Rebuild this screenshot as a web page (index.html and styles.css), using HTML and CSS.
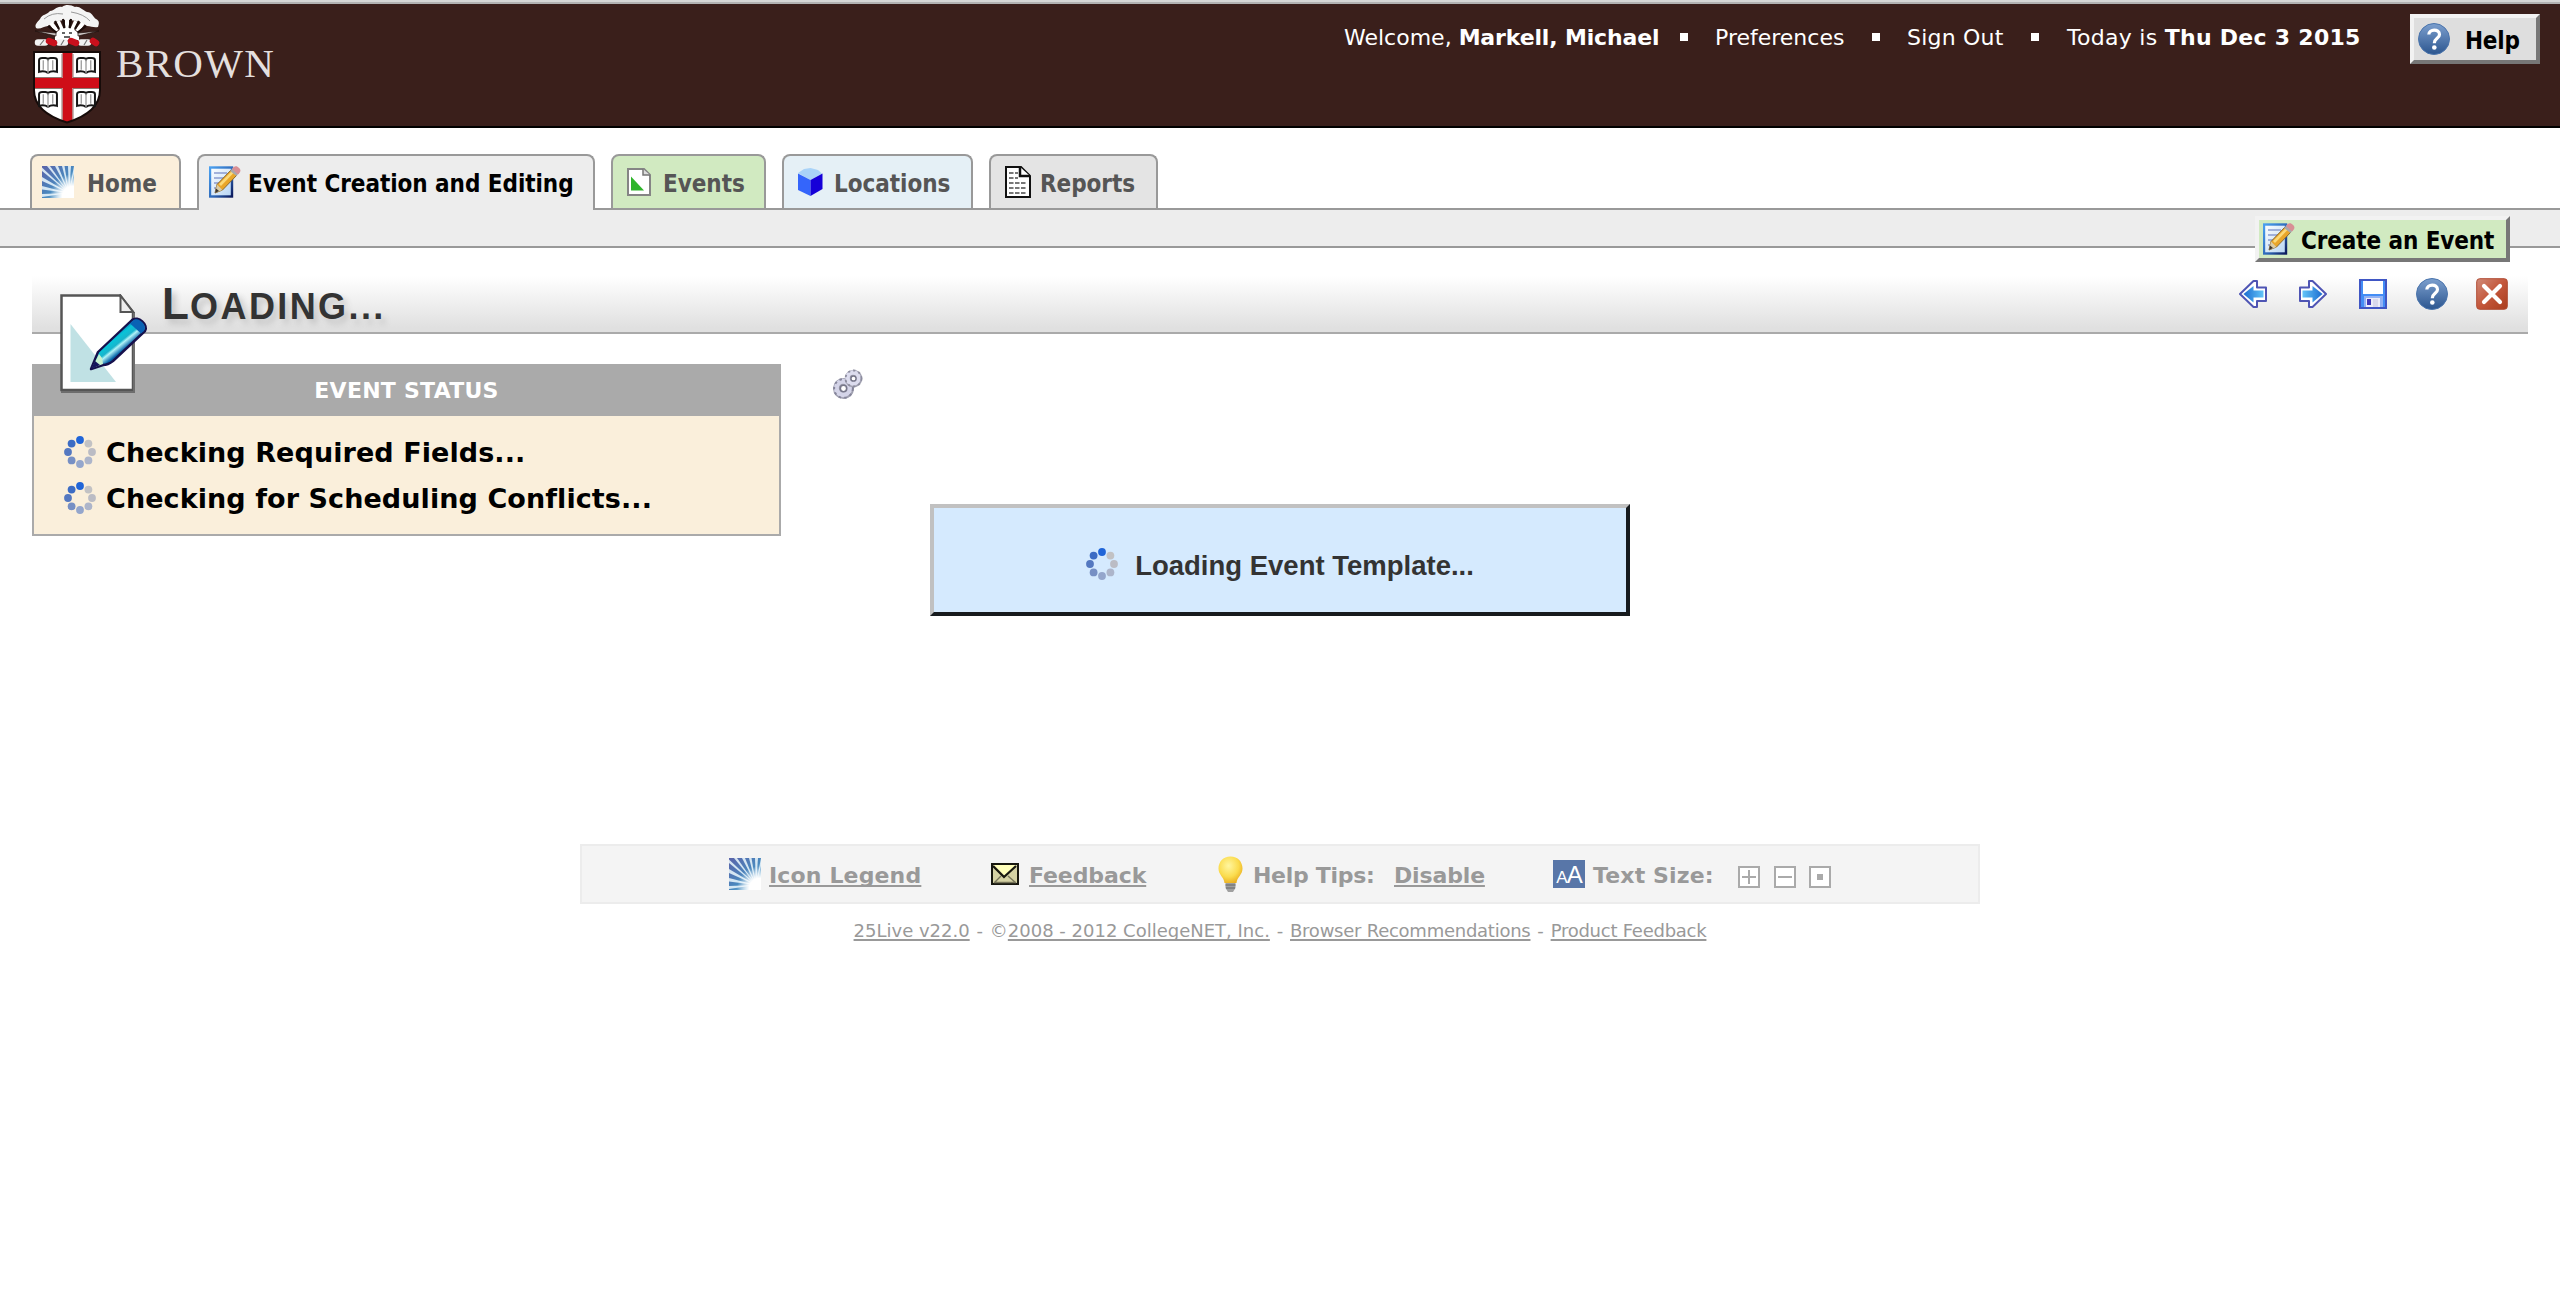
FILE: index.html
```
<!DOCTYPE html>
<html lang="en">
<head>
<meta charset="utf-8">
<title>25Live</title>
<link rel="stylesheet" href="styles.css">
</head>
<body>
<svg class="defs" aria-hidden="true">
  <defs>
    <linearGradient id="gBlue" x1="0" y1="0" x2="0" y2="1"><stop offset="0" stop-color="#7c9fce"/><stop offset="1" stop-color="#2c568f"/></linearGradient>
    <linearGradient id="gRed" x1="0" y1="0" x2="1" y2="1"><stop offset="0" stop-color="#d08a78"/><stop offset=".5" stop-color="#c4573b"/><stop offset="1" stop-color="#a93c1c"/></linearGradient>
    <linearGradient id="gRay" x1="0" y1="0" x2="1" y2="1"><stop offset="0" stop-color="#5a62a8"/><stop offset=".55" stop-color="#4a8abf"/><stop offset="1" stop-color="#c8eef8"/></linearGradient>
    <radialGradient id="gGlow" cx="0.95" cy="0.95" r=".7"><stop offset=".45" stop-color="#fff"/><stop offset="1" stop-color="#fff" stop-opacity="0"/></radialGradient>
    <linearGradient id="gPage" x1="0" y1="0" x2="1" y2="1"><stop offset="0" stop-color="#fff"/><stop offset="1" stop-color="#b5d4f3"/></linearGradient>
    <linearGradient id="gFrame" x1="0" y1="0" x2="1" y2="1"><stop offset="0" stop-color="#4aa0f0"/><stop offset=".6" stop-color="#2c64b4"/><stop offset="1" stop-color="#0c1a5c"/></linearGradient>
    <linearGradient id="gArrow" x1="0" y1="0" x2="1" y2="0"><stop offset="0" stop-color="#1c6cd0"/><stop offset="1" stop-color="#62c4f8"/></linearGradient>
    <radialGradient id="gBulb" cx=".42" cy=".35" r=".7"><stop offset="0" stop-color="#fff6a0"/><stop offset=".6" stop-color="#fbdc4e"/><stop offset="1" stop-color="#e9ab1c"/></radialGradient>
    <linearGradient id="gPen" gradientUnits="userSpaceOnUse" x1="50" y1="40" x2="63" y2="56"><stop offset="0" stop-color="#0648a0"/><stop offset=".35" stop-color="#08c4d8"/><stop offset=".6" stop-color="#18b4cc"/><stop offset=".72" stop-color="#b0f4f8"/><stop offset="1" stop-color="#0864a8"/></linearGradient>
    <clipPath id="cShield"><path d="M6 48H72V86C72 102 60 112 39 118.500C18 112 6 102 6 86Z"/></clipPath>

    <symbol id="rays" viewBox="0 0 32 32">
      <rect width="32" height="32" fill="url(#gRay)"/>
      <g fill="#e3f2fa" fill-opacity=".9">
        <path d="M27 27L0 31V28Z"/><path d="M27 27L0 23.500V20Z"/><path d="M27 27L0 15V11Z"/><path d="M27 27L0 5V1.500Z"/>
        <path d="M27 27L5 0H8Z"/><path d="M27 27L13 0H16Z"/><path d="M27 27L20 0H22.500Z"/><path d="M27 27L26 0H29Z"/><path d="M27 27L32 0V8Z"/>
      </g>
      <rect width="32" height="32" fill="url(#gGlow)"/>
    </symbol>
    <symbol id="edit" viewBox="0 0 32 32">
      <rect x="1" y="1.500" width="22" height="29" fill="url(#gPage)" stroke="url(#gFrame)" stroke-width="2.400"/>
      <path d="M5 7H18M5 12H17M5 17H13M5 22H10" stroke="#8a9cd0" stroke-width="1.600"/>
      <path d="M6 27L8 18.500L22 4L28 9L13.500 24Z" fill="#e9a62a" stroke="#8a6a30" stroke-width="1"/>
      <path d="M10 18L23.500 4.500L25.500 6L12 20Z" fill="#fbd978"/>
      <path d="M6 27L8 18.500L13.500 24Z" fill="#d9cba6"/><path d="M6 27L7 22.500L10 25Z" fill="#3a3430"/>
      <path d="M21 5L24 2L30 7L27.500 10Z" fill="#a8a8ac"/><path d="M23 3C25-0.500 28-0.500 30 2C32.500 4 31.500 6.500 29 8.500Z" fill="#d88f95"/>
    </symbol>
    <symbol id="q" viewBox="0 0 32 32">
      <circle cx="16" cy="16" r="15.500" fill="url(#gBlue)" stroke="#4a74ac"/>
      <path d="M10.800 11.500C11 5.800 21.300 5.400 21.500 11.500C21.500 15.400 16.300 15.400 16.300 20.200" fill="none" stroke="#fff" stroke-width="3.200"/>
      <circle cx="16.300" cy="24.500" r="2.300" fill="#fff"/>
    </symbol>
    <symbol id="arrow" viewBox="0 0 28 28">
      <path d="M1 14L14.500 1H18V7.500H27V21H18V27H14.500Z" fill="#fff" stroke="#4f55b4" stroke-width="2" stroke-linejoin="round"/>
      <path d="M4.500 14L14.500 6V10.500H24.500V17.500H14.500V22.500Z" fill="url(#gArrow)"/>
    </symbol>
    <symbol id="spin" viewBox="0 0 32 32">
      <circle cx="16" cy="4" r="3.900" fill="#2065d8"/><circle cx="7.600" cy="7.600" r="3.900" fill="#3c6cc4"/>
      <circle cx="4" cy="16" r="3.900" fill="#5478c0"/><circle cx="7.600" cy="24.400" r="3.900" fill="#768fc4"/>
      <circle cx="16" cy="28" r="3.900" fill="#94a6cc"/><circle cx="24.400" cy="24.400" r="3.900" fill="#adb5ca"/>
      <circle cx="28" cy="16" r="3.900" fill="#bbbcc4"/><circle cx="24.400" cy="7.600" r="3.900" fill="#c2c2c4"/>
    </symbol>
    <symbol id="book" viewBox="0 0 19 17">
      <path d="M1 14V3Q1 1 4 1H7Q9 1 9.500 2Q10 1 12 1H15Q18 1 18 3V14Q13 12.500 9.500 15Q6 12.500 1 14Z" fill="#fff" stroke="#161616" stroke-width="1.900"/>
      <path d="M5 3V12M9.500 2V16M14 3V12" stroke="#999" stroke-width="1.200"/>
    </symbol>
  </defs>
</svg>

<header class="top">
  <div class="brand">
    <svg class="crest" viewBox="0 0 78 122" width="78" height="122">
      <path d="M8 24C6 20 10 18 12 15C14 10 19 11 22 7C27 7 28 2 34 3C38 0 43 1 47 3C52 2 54 6 59 8C64 8 65 13 68 15C72 17 71 20 70 23C66 24 63 22 59 22C53 18 47 16 39 16C31 16 26 18 20 22C16 22 12 26 8 24Z" fill="#f4f4f4"/>
      <path d="M16 15Q24 8 35 10M43 8Q56 10 62 17" fill="none" stroke="#999" stroke-width="1"/>
      <path d="M23 19L29 27M30 17L34 26M39 16V26M48 17L44 26M55 19L49 27" stroke="#fff" stroke-width="4"/>
      <path d="M20 22L29 29M27 17L31 25M35 15L36.500 24M43 15L41.500 24M51 17L47 25M58 22L49 29" stroke="#1b0c09" stroke-width="2.200"/>
      <path d="M27 36C26 28 32 24 39 24C46 24 52 28 51 36Z" fill="#fff"/>
      <path d="M7 27L28 29V32ZM71 27L50 29V32Z" fill="#cfc8c6" stroke="#1b0c09" stroke-width=".7"/>
      <path d="M34 29H37M41 29H44M36 33H42" stroke="#333" stroke-width="1.500"/>
      <g stroke-width="6.500" stroke-linecap="round">
        <path d="M10 38.500L17 38.500M31 38.500L37 38.500M53 38.500L60 38.500" stroke="#f2f2f2"/>
        <path d="M21 37L26 39M43 37L48 39M65 37L68 39" stroke="#c9101c"/>
      </g>
      <path d="M12 41L16 36M33 41L36 36M56 41L59 36" stroke="#777" stroke-width="1.200"/>
      <g clip-path="url(#cShield)">
        <rect x="6" y="48" width="66" height="76" fill="#fff"/>
        <path d="M39.500 48V124M6 79H72" stroke="#cf0e18" stroke-width="10"/>
        <path d="M34 50V73.500H6M45 50V73.500H72M34 124V84.500H6M45 124V84.500H72" fill="none" stroke="#8b7770" stroke-width="1"/>
      </g>
      <path d="M6 48H72V86C72 102 60 112 39 118.500C18 112 6 102 6 86Z" fill="none" stroke="#160b09" stroke-width="2"/>
      <use href="#book" x="10" y="53" width="20" height="18"/><use href="#book" x="48" y="53" width="20" height="18"/>
      <use href="#book" x="10" y="87" width="20" height="18"/><use href="#book" x="48" y="87" width="20" height="18"/>
    </svg>
    <span class="wordmark">BROWN</span>
  </div>
  <nav class="user">
    <span class="who">Welcome, <b>Markell, Michael</b></span>
    <i class="dot"></i>
    <span class="prefs">Preferences</span>
    <i class="dot"></i>
    <span class="out">Sign Out</span>
    <i class="dot"></i>
    <span class="today">Today is <b>Thu Dec 3 2015</b></span>
    <button class="help"><svg width="32" height="32"><use href="#q"/></svg><span>Help</span></button>
  </nav>
</header>

<nav class="tabs">
  <a class="tab home"><svg width="32" height="32"><use href="#rays"/></svg><span>Home</span></a>
  <a class="tab active"><svg width="32" height="32"><use href="#edit"/></svg><span>Event Creation and Editing</span></a>
  <a class="tab events"><svg width="24" height="28" viewBox="0 0 24 28"><path d="M1 1H17L23 7V27H1Z" fill="#fff" stroke="#858585" stroke-width="2"/><path d="M16 1V7H23" fill="#ddd" stroke="#777" stroke-width="1.500"/><path d="M4 8.500L17 22.500H4Z" fill="#2eb42a"/></svg><span>Events</span></a>
  <a class="tab locations"><svg width="25" height="29" viewBox="0 0 25 29"><path d="M0 5L6 1L12.500 0L20 2L24 5.500L12.500 12Z" fill="#a9d3f8"/><path d="M0 5.500L12.500 12V28L0 22Z" fill="#3465fb"/><path d="M24.500 5.500L12.500 12V28L24.500 21Z" fill="#1600d8"/></svg><span>Locations</span></a>
  <a class="tab reports"><svg width="26" height="32" viewBox="0 0 26 32"><path d="M1 1H16L25 10V31H1Z" fill="#fff" stroke="#111" stroke-width="2"/><path d="M15 1V10H25" fill="#fff" stroke="#111" stroke-width="2.500"/><path d="M4 7H13M4 12H13M4 17H22M4 22H22M4 27H22" stroke="#777" stroke-width="1.800" stroke-dasharray="4.500 1.500"/></svg><span>Reports</span></a>
</nav>
<div class="subnav">
  <button class="create"><svg width="32" height="32"><use href="#edit"/></svg><span>Create an Event</span></button>
</div>

<section class="titlebar">
  <svg class="doc" width="88" height="102" viewBox="0 0 88 102">
    <path d="M1.500 1.500H60L73 18V96H1.500Z" fill="#fff" stroke="#555" stroke-width="2.500"/>
    <path d="M1 98H74V18" fill="none" stroke="#6d6d6d" stroke-width="2"/>
    <path d="M60.500 1.500V18H73Z" fill="#eee" stroke="#555" stroke-width="2"/>
    <path d="M10.500 30L56 88H10.500Z" fill="#c0e1e4"/>
    <path d="M31 75L38 58L72 26C78 21 89 31 85 37L53 67Q48 71 43 71Z" fill="url(#gPen)" stroke="#16104c" stroke-width="2.400" stroke-linejoin="round"/>
    <path d="M73 26.500C78 22 88 31 84 37L81 39.500L70 29.500Z" fill="#0a62b4"/>
    <path d="M32 74L39 60L42 64L43 70Z" fill="#c8f2d0"/><path d="M31 75L35 67L40 71Z" fill="#14145c"/>
  </svg>
  <h1 class="title"><span class="cap">L</span>OADING...</h1>
  <div class="actions">
    <svg width="28" height="28"><use href="#arrow"/></svg>
    <svg class="flip" width="28" height="28"><use href="#arrow"/></svg>
    <svg width="28" height="30" viewBox="0 0 28 30"><rect x="1" y="1" width="26" height="28" fill="#438df5" stroke="#4056c4" stroke-width="2"/><path d="M4 2H24V15H4Z" fill="#fff"/><path d="M5 17H24V28H5Z" fill="#93b2f4"/><path d="M7 19H21V28H7Z" fill="#ececf8"/><path d="M8 20H12V26H8Z" fill="#3f39b8"/><path d="M14 20H19V28H14Z" fill="#d8d8ec"/></svg>
    <svg width="32" height="32"><use href="#q"/></svg>
    <svg width="32" height="32" viewBox="0 0 32 32"><rect x=".7" y=".7" width="30.600" height="30.600" rx="3" fill="url(#gRed)" stroke="#b04c34"/><path d="M8 8L24 24M24 8L8 24" stroke="#fff" stroke-width="4.200" stroke-linecap="round"/></svg>
  </div>
</section>

<main class="work">
  <section class="panel">
    <h2>EVENT STATUS</h2>
    <ul>
      <li><svg width="32" height="32"><use href="#spin"/></svg><span>Checking Required Fields...</span></li>
      <li><svg width="32" height="32"><use href="#spin"/></svg><span>Checking for Scheduling Conflicts...</span></li>
    </ul>
  </section>
  <svg class="gears" width="32" height="32" viewBox="0 0 32 32">
    <circle cx="11.500" cy="20.500" r="7" fill="none" stroke="#a0a0b0" stroke-width="7"/>
    <circle cx="11" cy="20" r="6.700" fill="none" stroke="#d4d4e8" stroke-width="5"/>
    <circle cx="11.500" cy="20.500" r="9.400" fill="none" stroke="#85859a" stroke-width="2" stroke-dasharray="2.500 3.200"/>
    <circle cx="11.500" cy="20.500" r="3.200" fill="#fff" stroke="#77778a" stroke-width="1.600"/>
    <circle cx="21.500" cy="10.500" r="5.800" fill="none" stroke="#a0a0b0" stroke-width="6"/>
    <circle cx="21" cy="10" r="5.500" fill="none" stroke="#dcdcee" stroke-width="4.500"/>
    <circle cx="21.500" cy="10.500" r="8" fill="none" stroke="#8c8c9e" stroke-width="1.800" stroke-dasharray="2.300 3"/>
    <circle cx="21.500" cy="10.500" r="2.600" fill="#fff" stroke="#77778a" stroke-width="1.500"/>
  </svg>
</main>
<div class="modal"><svg width="32" height="32"><use href="#spin"/></svg><span>Loading Event Template...</span></div>

<footer class="foot">
  <div class="tools">
    <svg width="32" height="32"><use href="#rays"/></svg>
    <a class="legend">Icon Legend</a>
    <svg class="mail" width="28" height="22" viewBox="0 0 28 22"><rect x="1" y="1" width="26" height="20" fill="#d5d2a4" stroke="#17170f" stroke-width="2"/><path d="M3 2H25L14 13Z" fill="#ffffba"/><path d="M2 3L13 14L25 3" fill="none" stroke="#17170f" stroke-width="2.200"/><path d="M3 20L10 13M25 20L17 13M4 19.500H25" stroke="#77755a" stroke-width="1.400"/></svg>
    <a class="feedback">Feedback</a>
    <svg class="bulb" width="25" height="37" viewBox="0 0 25 37"><path d="M12.500 .5C5 .5.500 6 .500 12.500C.500 19 6 21 6.500 27H18.500C19 21 24.500 19 24.500 12.500C24.500 6 20 .5 12.500 .5Z" fill="url(#gBulb)"/><path d="M7.500 27H17.500V32L15 36H10L7.500 32Z" fill="#a0a0a0"/><path d="M7.500 29H17.500M8 32H17" stroke="#666" stroke-width="1.200"/></svg>
    <span class="tips">Help Tips:</span>
    <a class="disable">Disable</a>
    <span class="aa"><span class="small">A</span>A</span>
    <span class="size">Text Size:</span>
    <svg class="box" width="22" height="22" viewBox="0 0 22 22"><path d="M1 1H21V21H1Z" fill="#fff" stroke="#aaa" stroke-width="2"/><path d="M4 11H18M11 4V18" stroke="#aaa" stroke-width="2"/></svg>
    <svg class="box" width="22" height="22" viewBox="0 0 22 22"><path d="M1 1H21V21H1Z" fill="#fff" stroke="#aaa" stroke-width="2"/><path d="M4 11H18" stroke="#aaa" stroke-width="2"/></svg>
    <svg class="box" width="22" height="22" viewBox="0 0 22 22"><path d="M1 1H21V21H1Z" fill="#fff" stroke="#aaa" stroke-width="2"/><path d="M8 8H14V14H8Z" fill="#aaa"/></svg>
  </div>
  <p class="legal"><a>25Live v22.0</a> - ©<a>2008 - 2012 CollegeNET, Inc.</a> - <a class="tight">Browser Recommendations</a> - <a class="tight">Product Feedback</a></p>
</footer>
</body>
</html>
```
FILE: styles.css
```
* { box-sizing: border-box; }
body { margin: 0; min-height: 1290px; background: #fff; color: #000; font-family: "DejaVu Sans", Verdana, sans-serif; position: relative; overflow: hidden; }
svg { display: block; flex: none; }
span, a { white-space: nowrap; }
.defs { position: absolute; width: 0; height: 0; }

.top { height: 128px; display: flex; justify-content: space-between; align-items: flex-start; background: #3a1f1b; border-bottom: 2px solid #000; border-top: 2px solid #d6d6d6; box-shadow: inset 0 2px #b2b2b2; padding: 0 20px 0 28px; color: #fff; }
.brand { display: flex; height: 122px; margin-top: 2px; gap: 10px; }
.wordmark { margin-top: 35px; line-height: 48px; font-family: "Liberation Serif", "Times New Roman", serif; font-size: 41px; letter-spacing: 1.3px; color: #e4dfde; }

.user { display: flex; align-items: center; font-size: 22px; margin-top: 10px; height: 54px; line-height: 52px; }
.user > span { height: 54px; line-height: 51px; }
.who { width: 336px; }
.who b { letter-spacing: -0.15px; }
.dot { width: 8px; height: 8px; background: #fff; margin-bottom: 4px; }
.prefs { width: 165px; margin-left: 27px; }
.prefs + .dot { margin-left: -8px; }
.out { width: 97px; margin-left: 27px; letter-spacing: 0.2px; }
.out + .dot { margin-left: 27px; }
.today { width: 343px; margin-left: 28px; letter-spacing: 0.28px; }
.help { width: 130px; height: 50px; display: flex; align-items: center; gap: 15px; padding: 0 0 0 4px; background: #dedede; border: 4px solid; border-color: #f2f2f2 #777 #777 #f2f2f2; border-radius: 0; color: #000; }
.help span, .create span, .tab span { font: 700 24px/30px "DejaVu Sans Condensed", "DejaVu Sans", Tahoma, sans-serif; }
.help span { padding-top: 3px; letter-spacing: -0.2px; }

.tabs { display: flex; gap: 16px; padding: 26px 0 0 30px; height: 80px; position: relative; z-index: 1; }
.tab { display: flex; align-items: center; height: 54px; border: 2px solid #999; border-bottom: 0; border-radius: 8px 8px 0 0; color: #555; }
.tab span { padding-top: 3px; letter-spacing: -0.05px; }
.home { width: 151px; padding-left: 10px; gap: 13px; background: #fbefdb; }
.active { width: 398px; height: 56px; padding: 0 0 2px 10px; gap: 7px; background: #ededed; color: #000; }
.events { width: 155px; padding-left: 14px; gap: 12px; background: #d1eac1; }
.locations { width: 191px; padding-left: 14px; gap: 11px; background: #e5f0f6; }
.reports { width: 169px; padding-left: 14px; gap: 9px; background: #e4e4e4; }
.subnav { height: 40px; background: #ededed; border: solid #999; border-width: 2px 0; position: relative; }
.create { position: absolute; z-index: 2; left: 2255px; top: 6px; width: 255px; height: 46px; display: flex; align-items: center; gap: 6px; padding: 0 0 0 4px; background: #d1eac1; border: 4px solid; border-color: #f2f2f2 #777 #777 #f2f2f2; color: #000; }
.create span { padding-top: 3px; letter-spacing: -0.1px; }

.titlebar { height: 62px; margin: 24px 32px 0; display: flex; position: relative; background: linear-gradient(#fff 4px, #e0e0e0 56px); border-bottom: 2px solid #aaa; padding-right: 20px; justify-content: space-between; }
.doc { position: absolute; left: 28px; top: 22px; }
.title { margin: 0 0 0 130px; font: 700 36px/64px "Liberation Sans", Arial, sans-serif; letter-spacing: 2.4px; color: #333; text-shadow: 4px 5px 6px #c4c4c4; }
.cap { font-size: 44px; letter-spacing: 1.2px; }
.actions { display: flex; align-items: center; gap: 32px; height: 44px; }
.actions svg:nth-child(4) { margin-left: -3px; }
.actions svg:nth-child(5) { margin-left: -4px; }
.flip { transform: scaleX(-1); }

.work { display: flex; align-items: flex-start; padding: 30px 0 0 32px; gap: 51px; height: 510px; }
.panel { width: 749px; height: 172px; border: solid #aaa; border-width: 0 2px 2px; background: #faefdb; }
.panel h2 { margin: 0; height: 52px; background: #aaa; color: #fff; font-size: 22px; line-height: 54px; text-align: center; letter-spacing: 0.25px; }
.panel ul { list-style: none; margin: 0; padding: 13px 0 0 30px; }
.panel li { display: flex; align-items: center; gap: 10px; height: 46px; font-weight: 700; font-size: 27px; }
.panel li span { padding-top: 1px; letter-spacing: 0.08px; }
.gears { margin-top: 4px; }

.modal { position: absolute; left: 930px; top: 504px; width: 700px; height: 112px; border: 4px solid; border-color: #c1c1c1 #171b1e #171b1e #c1c1c1; background: #d5eafe; display: flex; align-items: center; justify-content: center; gap: 17px; padding-top: 8px; color: #333; font: 700 27.5px/34px "Liberation Sans", Arial, sans-serif; }
.modal span { padding-top: 3px; }

.foot { color: #999; }
.tools { width: 1400px; height: 60px; margin: 0 auto; display: flex; align-items: center; background: #f4f4f4; border: 2px solid #ececec; padding-left: 147px; font-weight: 700; font-size: 22px; line-height: 28px; }
.foot a { text-decoration: underline; text-decoration-thickness: 2px; text-underline-offset: 2px; text-decoration-skip-ink: none; }
.tools a, .tips, .size { padding-top: 3px; }
.legend { width: 230px; padding-left: 8px; letter-spacing: 0.15px; }
.mail { margin-right: 10px; }
.feedback { width: 189px; letter-spacing: -0.1px; }
.bulb { margin-right: 10px; }
.tips { width: 141px; letter-spacing: -0.3px; }
.disable { width: 159px; letter-spacing: -0.15px; }
.aa { width: 32px; height: 28px; margin-right: 8px; background: #5876a8; color: #fff; font: 400 24px/29px "Liberation Sans", Arial, sans-serif; text-align: center; letter-spacing: -1px; }
.small { font-size: 17px; }
.size { width: 145px; letter-spacing: 0.15px; }
.box { margin: 6px 13.5px 0 0; }
.legal { margin: 14px 0 0; text-align: center; font-size: 18px; line-height: 26px; word-spacing: 1.1px; }
.legal .tight { letter-spacing: -0.25px; }
.legal a { text-decoration-thickness: 1.5px; word-spacing: 0; }
```
